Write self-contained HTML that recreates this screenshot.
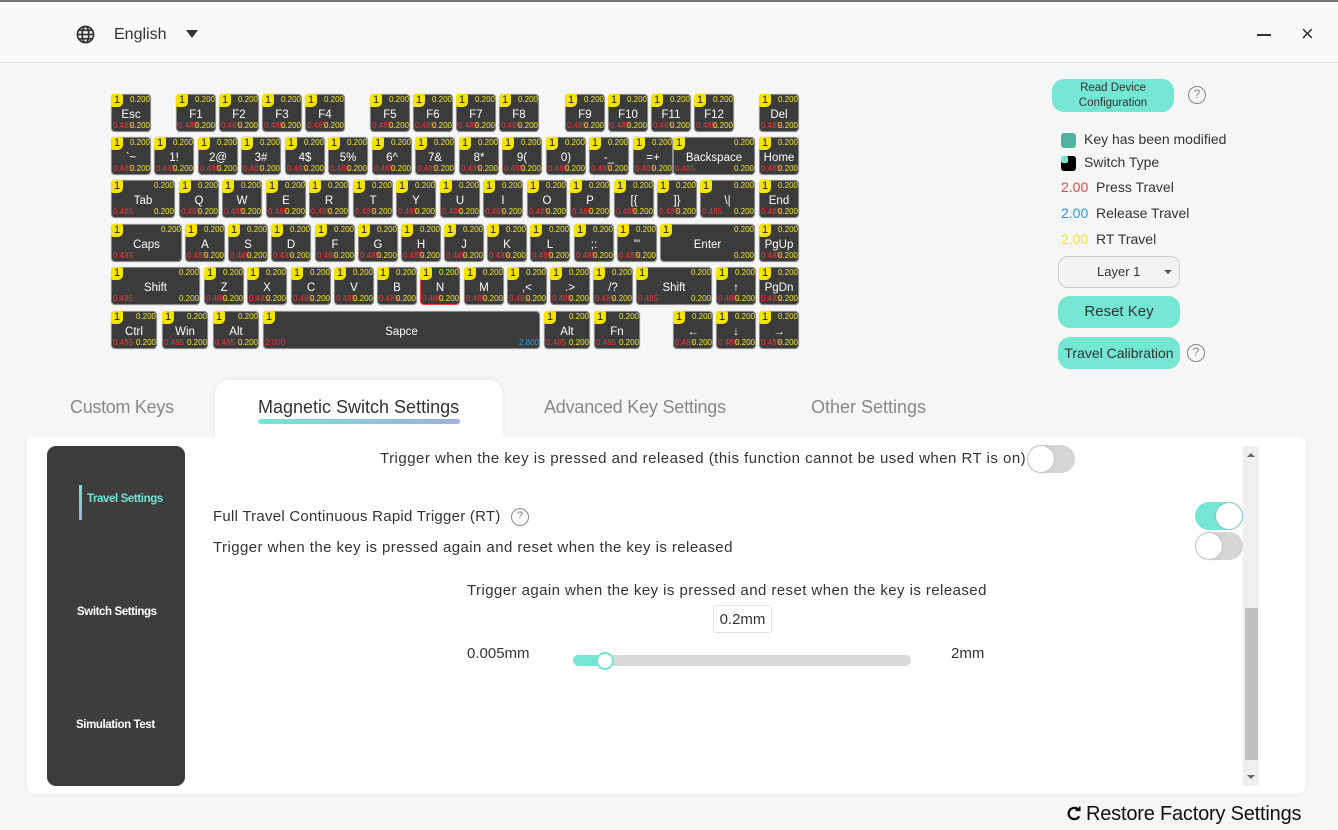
<!DOCTYPE html>
<html><head><meta charset="utf-8"><style>
*{margin:0;padding:0;box-sizing:border-box}
body{width:1338px;height:830px;background:#f6f6f6;font-family:"Liberation Sans",sans-serif;position:relative;overflow:hidden;color:#333}
.top{position:absolute;left:0;top:0;width:1338px;height:2px;background:#777}
.hdr{position:absolute;left:0;top:2px;width:1338px;height:61px;background:#fafafa;border-bottom:1px solid #ddd}
.k{position:absolute;height:38px;width:40px;background:#3b3b3b;border:1px solid #8a8a8a;border-radius:4px;color:#fff;font-size:11.5px;text-align:center;line-height:41px;box-shadow:0 0 1px #aaa}
.k::before{content:"1";position:absolute;left:-1px;top:-1px;width:12px;height:13px;background:#f5e400;color:#222;border-radius:3px 2px 5px 2px;font-size:11px;line-height:13px;text-align:center}
.k i{position:absolute;right:0;top:0;font-style:normal;font-size:8px;line-height:10px;color:#f2ea2c}
.k b{position:absolute;left:1px;bottom:0;font-weight:normal;font-size:8px;line-height:10px;color:#e8373b}
.k u{position:absolute;right:0;bottom:0;text-decoration:none;font-size:8px;line-height:10px;color:#f2ea2c}
.btn{position:absolute;background:#74e6d2;border-radius:12px;color:#333;text-align:center}
.q{position:absolute;width:18px;height:18px;border:1.5px solid #888;border-radius:50%;color:#888;font-size:12px;line-height:15px;text-align:center}
.tog{position:absolute;width:48px;height:28px;border-radius:14px;background:#d6d6d6}
.tog::after{content:"";position:absolute;left:1px;top:1px;width:26px;height:26px;border-radius:50%;background:#fff;box-shadow:0 0 2px #999}
.tog.on{background:#74e6d2}.tog.on::after{left:auto;right:1px}
.t{position:absolute;font-size:15px;color:#333;white-space:nowrap}
.ls{letter-spacing:.43px}
</style></head><body>
<div class="top"></div>
<div class="hdr"></div>
<svg style="position:absolute;left:76px;top:25px" width="19" height="19" viewBox="0 0 20 20" fill="none" stroke="#333" stroke-width="1.8"><circle cx="10" cy="10" r="8.5"/><ellipse cx="10" cy="10" rx="3.5" ry="8.5"/><path d="M1.5 10h17M3 5.5h14M3 14.5h14"/></svg>
<div class="t" style="left:114px;top:26px;font-size:16px">English</div>
<div style="position:absolute;left:186px;top:30px;width:0;height:0;border-left:6px solid transparent;border-right:6px solid transparent;border-top:8px solid #333"></div>
<div style="position:absolute;left:1257px;top:34px;width:14px;height:1.5px;background:#333"></div>
<div class="t" style="left:1301px;top:21px;font-size:22px">×</div>

<!-- row1 -->
<div class="k" style="left:111px;top:94px">Esc<i>0.200</i><b>0.485</b><u>0.200</u></div>
<div class="k" style="left:176px;top:94px">F1<i>0.200</i><b>0.485</b><u>0.200</u></div>
<div class="k" style="left:219px;top:94px">F2<i>0.200</i><b>0.485</b><u>0.200</u></div>
<div class="k" style="left:262px;top:94px">F3<i>0.200</i><b>0.485</b><u>0.200</u></div>
<div class="k" style="left:305px;top:94px">F4<i>0.200</i><b>0.485</b><u>0.200</u></div>
<div class="k" style="left:370px;top:94px">F5<i>0.200</i><b>0.485</b><u>0.200</u></div>
<div class="k" style="left:413px;top:94px">F6<i>0.200</i><b>0.485</b><u>0.200</u></div>
<div class="k" style="left:456px;top:94px">F7<i>0.200</i><b>0.485</b><u>0.200</u></div>
<div class="k" style="left:499px;top:94px">F8<i>0.200</i><b>0.485</b><u>0.200</u></div>
<div class="k" style="left:565px;top:94px">F9<i>0.200</i><b>0.485</b><u>0.200</u></div>
<div class="k" style="left:608px;top:94px">F10<i>0.200</i><b>0.485</b><u>0.200</u></div>
<div class="k" style="left:651px;top:94px">F11<i>0.200</i><b>0.485</b><u>0.200</u></div>
<div class="k" style="left:694px;top:94px">F12<i>0.200</i><b>0.485</b><u>0.200</u></div>
<div class="k" style="left:759px;top:94px">Del<i>0.200</i><b>0.485</b><u>0.200</u></div>
<!-- row2 -->
<div class="k" style="left:111px;top:137px">`~<i>0.200</i><b>0.485</b><u>0.200</u></div>
<div class="k" style="left:154px;top:137px">1!<i>0.200</i><b>0.485</b><u>0.200</u></div>
<div class="k" style="left:198px;top:137px">2@<i>0.200</i><b>0.485</b><u>0.200</u></div>
<div class="k" style="left:241px;top:137px">3#<i>0.200</i><b>0.485</b><u>0.200</u></div>
<div class="k" style="left:285px;top:137px">4$<i>0.200</i><b>0.485</b><u>0.200</u></div>
<div class="k" style="left:328px;top:137px">5%<i>0.200</i><b>0.485</b><u>0.200</u></div>
<div class="k" style="left:372px;top:137px">6^<i>0.200</i><b>0.485</b><u>0.200</u></div>
<div class="k" style="left:415px;top:137px">7&amp;<i>0.200</i><b>0.485</b><u>0.200</u></div>
<div class="k" style="left:459px;top:137px">8*<i>0.200</i><b>0.485</b><u>0.200</u></div>
<div class="k" style="left:502px;top:137px">9(<i>0.200</i><b>0.485</b><u>0.200</u></div>
<div class="k" style="left:546px;top:137px">0)<i>0.200</i><b>0.485</b><u>0.200</u></div>
<div class="k" style="left:589px;top:137px">-_<i>0.200</i><b>0.485</b><u>0.200</u></div>
<div class="k" style="left:633px;top:137px">=+<i>0.200</i><b>0.485</b><u>0.200</u></div>
<div class="k" style="left:673px;top:137px;width:82px">Backspace<i>0.200</i><b>0.485</b><u>0.200</u></div>
<div class="k" style="left:759px;top:137px">Home<i>0.200</i><b>0.485</b><u>0.200</u></div>
<!-- row3 -->
<div class="k" style="left:111px;top:180px;width:64px">Tab<i>0.200</i><b>0.485</b><u>0.200</u></div>
<div class="k" style="left:179px;top:180px">Q<i>0.200</i><b>0.485</b><u>0.200</u></div>
<div class="k" style="left:222px;top:180px">W<i>0.200</i><b>0.485</b><u>0.200</u></div>
<div class="k" style="left:266px;top:180px">E<i>0.200</i><b>0.485</b><u>0.200</u></div>
<div class="k" style="left:309px;top:180px">R<i>0.200</i><b>0.485</b><u>0.200</u></div>
<div class="k" style="left:353px;top:180px">T<i>0.200</i><b>0.485</b><u>0.200</u></div>
<div class="k" style="left:396px;top:180px">Y<i>0.200</i><b>0.485</b><u>0.200</u></div>
<div class="k" style="left:440px;top:180px">U<i>0.200</i><b>0.485</b><u>0.200</u></div>
<div class="k" style="left:483px;top:180px">I<i>0.200</i><b>0.485</b><u>0.200</u></div>
<div class="k" style="left:527px;top:180px">O<i>0.200</i><b>0.485</b><u>0.200</u></div>
<div class="k" style="left:570px;top:180px">P<i>0.200</i><b>0.485</b><u>0.200</u></div>
<div class="k" style="left:614px;top:180px">[{<i>0.200</i><b>0.485</b><u>0.200</u></div>
<div class="k" style="left:657px;top:180px">]}<i>0.200</i><b>0.485</b><u>0.200</u></div>
<div class="k" style="left:700px;top:180px;width:55px">\|<i>0.200</i><b>0.485</b><u>0.200</u></div>
<div class="k" style="left:759px;top:180px">End<i>0.200</i><b>0.485</b><u>0.200</u></div>
<!-- row4 -->
<div class="k" style="left:111px;top:224px;width:71px">Caps<i>0.200</i><b>0.485</b><u></u></div>
<div class="k" style="left:185px;top:224px">A<i>0.200</i><b>0.485</b><u>0.200</u></div>
<div class="k" style="left:228px;top:224px">S<i>0.200</i><b>0.485</b><u>0.200</u></div>
<div class="k" style="left:271px;top:224px">D<i>0.200</i><b>0.485</b><u>0.200</u></div>
<div class="k" style="left:315px;top:224px">F<i>0.200</i><b>0.485</b><u>0.200</u></div>
<div class="k" style="left:358px;top:224px">G<i>0.200</i><b>0.485</b><u>0.200</u></div>
<div class="k" style="left:401px;top:224px">H<i>0.200</i><b>0.485</b><u>0.200</u></div>
<div class="k" style="left:444px;top:224px">J<i>0.200</i><b>0.485</b><u>0.200</u></div>
<div class="k" style="left:487px;top:224px">K<i>0.200</i><b>0.485</b><u>0.200</u></div>
<div class="k" style="left:530px;top:224px">L<i>0.200</i><b>0.485</b><u>0.200</u></div>
<div class="k" style="left:574px;top:224px">;:<i>0.200</i><b>0.485</b><u>0.200</u></div>
<div class="k" style="left:617px;top:224px">'"<i>0.200</i><b>0.485</b><u>0.200</u></div>
<div class="k" style="left:660px;top:224px;width:95px">Enter<i>0.200</i><b></b><u>0.200</u></div>
<div class="k" style="left:759px;top:224px">PgUp<i>0.200</i><b>0.485</b><u>0.200</u></div>
<!-- row5 -->
<div class="k" style="left:111px;top:267px;width:89px">Shift<i>0.200</i><b>0.485</b><u>0.200</u></div>
<div class="k" style="left:204px;top:267px">Z<i>0.200</i><b>0.485</b><u>0.200</u></div>
<div class="k" style="left:247px;top:267px">X<i>0.200</i><b>0.485</b><u>0.200</u></div>
<div class="k" style="left:291px;top:267px">C<i>0.200</i><b>0.485</b><u>0.200</u></div>
<div class="k" style="left:334px;top:267px">V<i>0.200</i><b>0.485</b><u>0.200</u></div>
<div class="k" style="left:377px;top:267px">B<i>0.200</i><b>0.485</b><u>0.200</u></div>
<div class="k" style="left:420px;top:267px;border:1.5px solid #e8474a">N<i>0.200</i><b>0.485</b><u>0.200</u></div>
<div class="k" style="left:464px;top:267px">M<i>0.200</i><b>0.485</b><u>0.200</u></div>
<div class="k" style="left:507px;top:267px">,&lt;<i>0.200</i><b>0.485</b><u>0.200</u></div>
<div class="k" style="left:550px;top:267px">.&gt;<i>0.200</i><b>0.485</b><u>0.200</u></div>
<div class="k" style="left:593px;top:267px">/?<i>0.200</i><b>0.485</b><u>0.200</u></div>
<div class="k" style="left:636px;top:267px;width:76px">Shift<i>0.200</i><b>0.485</b><u>0.200</u></div>
<div class="k" style="left:716px;top:267px">↑<i>0.200</i><b>0.485</b><u>0.200</u></div>
<div class="k" style="left:759px;top:267px">PgDn<i>0.200</i><b>0.485</b><u>0.200</u></div>
<!-- row6 -->
<div class="k" style="left:111px;top:311px;width:46px">Ctrl<i>0.200</i><b>0.485</b><u>0.200</u></div>
<div class="k" style="left:162px;top:311px;width:46px">Win<i>0.200</i><b>0.485</b><u>0.200</u></div>
<div class="k" style="left:213px;top:311px;width:46px">Alt<i>0.200</i><b>0.485</b><u>0.200</u></div>
<div class="k" style="left:263px;top:311px;width:277px">Sapce<b>2.000</b><u style="color:#2a9be8">2.800</u></div>
<div class="k" style="left:544px;top:311px;width:46px">Alt<i>0.200</i><b>0.485</b><u>0.200</u></div>
<div class="k" style="left:594px;top:311px;width:46px">Fn<i>0.200</i><b>0.485</b><u>0.200</u></div>
<div class="k" style="left:673px;top:311px">←<i>0.200</i><b>0.485</b><u>0.200</u></div>
<div class="k" style="left:716px;top:311px">↓<i>0.200</i><b>0.485</b><u>0.200</u></div>
<div class="k" style="left:759px;top:311px">→<i>0.200</i><b>0.485</b><u>0.200</u></div>

<!-- right panel -->
<div class="btn" style="left:1052px;top:79px;width:122px;height:33px;font-size:11.5px;line-height:15px;padding-top:2px">Read Device<br>Configuration</div>
<div class="q" style="left:1188px;top:86px">?</div>
<div style="position:absolute;left:1061px;top:133px;width:15px;height:15px;background:#4fb39f;border-radius:3px"></div>
<div class="t" style="left:1084px;top:131px;font-size:14px">Key has been modified</div>
<div style="position:absolute;left:1061px;top:156px;width:15px;height:15px;background:#000;border-radius:3px"></div>
<div style="position:absolute;left:1061px;top:156px;width:7px;height:7px;background:#74e6d2;border-radius:2px"></div>
<div class="t" style="left:1084px;top:154px;font-size:14px">Switch Type</div>
<div class="t" style="left:1061px;top:179px;font-size:14px"><span style="color:#e8474a">2.00</span>&nbsp; Press Travel</div>
<div class="t" style="left:1061px;top:205px;font-size:14px"><span style="color:#2a9be8">2.00</span>&nbsp; Release Travel</div>
<div class="t" style="left:1061px;top:231px;font-size:14px"><span style="color:#f2e22c">2.00</span>&nbsp; RT Travel</div>
<div style="position:absolute;left:1058px;top:256px;width:122px;height:32px;border:1px solid #ccc;border-radius:10px;background:#f3f3f3;font-size:13px;line-height:30px;padding-left:38px">Layer 1</div>
<div style="position:absolute;left:1164px;top:270px;border-left:4px solid transparent;border-right:4px solid transparent;border-top:4px solid #555"></div>
<div class="btn" style="left:1058px;top:296px;width:122px;height:32px;font-size:15px;line-height:32px">Reset Key</div>
<div class="btn" style="left:1058px;top:337px;width:122px;height:32px;font-size:14px;line-height:32px">Travel Calibration</div>
<div class="q" style="left:1187px;top:344px">?</div>

<!-- tabs -->
<div style="position:absolute;left:215px;top:380px;width:288px;height:70px;background:#fff;border-radius:14px 14px 0 0;box-shadow:0 -1px 4px rgba(0,0,0,.06)"></div>
<div class="t" style="left:70px;top:397px;font-size:18px;color:#888;letter-spacing:-.3px">Custom Keys</div>
<div class="t" style="left:258px;top:397px;font-size:18px;color:#333">Magnetic Switch Settings</div>
<div style="position:absolute;left:258px;top:419px;width:202px;height:5px;border-radius:3px;background:linear-gradient(90deg,#74e6d2,#a0aee0)"></div>
<div class="t" style="left:544px;top:397px;font-size:18px;color:#888;letter-spacing:-.2px">Advanced Key Settings</div>
<div class="t" style="left:811px;top:397px;font-size:18px;color:#888">Other Settings</div>

<!-- panel -->
<div style="position:absolute;left:27px;top:437px;width:1279px;height:357px;background:#fff;border-radius:0 8px 8px 8px;box-shadow:0 1px 3px rgba(0,0,0,.06)"></div>
<div style="position:absolute;left:47px;top:446px;width:138px;height:340px;background:#3d3d3d;border-radius:9px"></div>
<div style="position:absolute;left:79px;top:485px;width:3px;height:35px;background:linear-gradient(#74e6d2,#a0aee0)"></div>
<div class="t" style="left:87px;top:493px;font-size:11.5px;color:#74e6d2;font-weight:bold;letter-spacing:-.4px">Travel Settings</div>
<div class="t" style="left:77px;top:606px;font-size:11.5px;color:#fff;font-weight:bold;letter-spacing:-.4px">Switch Settings</div>
<div class="t" style="left:76px;top:719px;font-size:11.5px;color:#fff;font-weight:bold;letter-spacing:-.4px">Simulation Test</div>

<div class="t" style="left:380px;top:450px;letter-spacing:.48px">Trigger when the key is pressed and released (this function cannot be used when RT is on)</div>
<div class="tog" style="left:1027px;top:445px"></div>
<div class="t" style="left:213px;top:508px;letter-spacing:.25px">Full Travel Continuous Rapid Trigger (RT)</div>
<div class="q" style="left:511px;top:508px;font-size:11px">?</div>
<div class="t ls" style="left:213px;top:539px">Trigger when the key is pressed again and reset when the key is released</div>
<div class="tog on" style="left:1195px;top:502px"></div>
<div class="tog" style="left:1195px;top:532px"></div>
<div class="t ls" style="left:467px;top:582px">Trigger again when the key is pressed and reset when the key is released</div>
<div style="position:absolute;left:713px;top:605px;width:59px;height:28px;border:1px solid #e3e3e3;border-radius:3px;font-size:15px;line-height:27px;text-align:center">0.2mm</div>
<div class="t" style="left:467px;top:645px">0.005mm</div>
<div class="t" style="left:951px;top:645px">2mm</div>
<div style="position:absolute;left:573px;top:655px;width:338px;height:11px;border-radius:6px;background:#d9d9d9"></div>
<div style="position:absolute;left:573px;top:655px;width:34px;height:11px;border-radius:6px;background:#74e6d2"></div>
<div style="position:absolute;left:596px;top:652px;width:18px;height:18px;border-radius:50%;background:#fff;border:2px solid #74e6d2"></div>

<div style="position:absolute;left:1243px;top:446px;width:16px;height:340px;background:#f0f0f0"></div>
<div style="position:absolute;left:1245px;top:608px;width:13px;height:152px;background:#c1c1c1"></div>
<div style="position:absolute;left:1247px;top:453px;border-left:4px solid transparent;border-right:4px solid transparent;border-bottom:4px solid #666"></div>
<div style="position:absolute;left:1247px;top:775px;border-left:4px solid transparent;border-right:4px solid transparent;border-top:4px solid #666"></div>

<svg style="position:absolute;left:1067px;top:806px" width="15" height="15" viewBox="0 0 16 16" fill="none" stroke="#111" stroke-width="2.5"><path d="M13 5A6 6 0 1 0 13 11"/><path d="M9 4.5h4.5V0.5" stroke-width="2"/></svg>
<div class="t" style="left:1086px;top:803px;font-size:20px;color:#111;letter-spacing:-.2px">Restore Factory Settings</div>
</body></html>
